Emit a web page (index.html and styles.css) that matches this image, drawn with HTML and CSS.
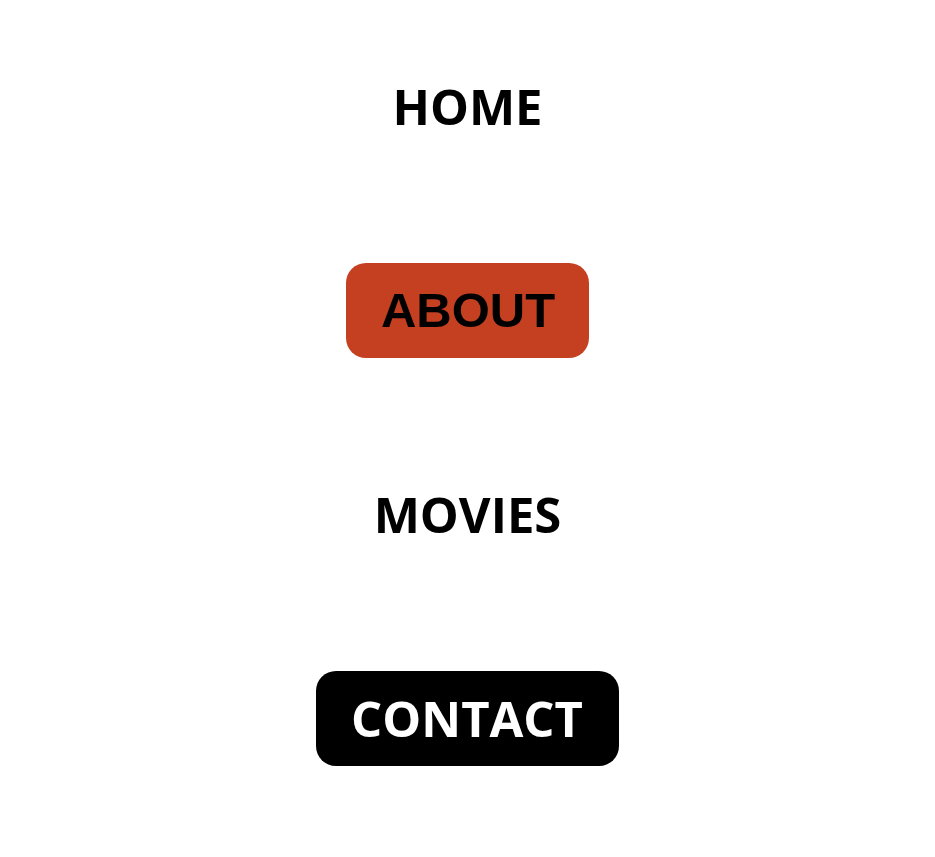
FILE: index.html
```html
<!DOCTYPE html>
<html>
<head>
<meta charset="utf-8">
<link rel="stylesheet" href="styles.css">
</head>
<body>
<nav class="nav">
  <ul class="menu">
    <li class="item"><a class="link" href="#">HOME</a></li>
    <li class="item"><a class="link link-about" href="#">ABOUT</a></li>
    <li class="item"><a class="link" href="#">MOVIES</a></li>
    <li class="item"><a class="link link-contact" href="#">CONTACT</a></li>
  </ul>
</nav>
</body>
</html>
```

FILE: styles.css
```css
html, body {
  margin: 0;
  padding: 0;
  background: #fff;
}
.nav {
  padding-top: 59px;
}
.menu {
  list-style: none;
  margin: 0;
  padding: 0;
  display: flex;
  flex-direction: column;
  align-items: center;
  gap: 109px;
}
.item {
  height: 95px;
  display: flex;
  align-items: center;
  justify-content: center;
}
.link {
  display: block;
  font-family: "Open Sans", sans-serif;
  font-weight: 700;
  font-size: 49px;
  line-height: 95px;
  padding: 0 36px;
  color: #000;
  text-decoration: none;
  border-radius: 20px;
}
.link-about {
  background: #c53f21;
  font-family: "Liberation Sans", Arial, sans-serif;
  font-size: 49px;
  padding: 0 34px 0 35px;
}
.link-contact {
  background: #000;
  color: #fff;
  padding: 0 36px 0 35px;
}
```
